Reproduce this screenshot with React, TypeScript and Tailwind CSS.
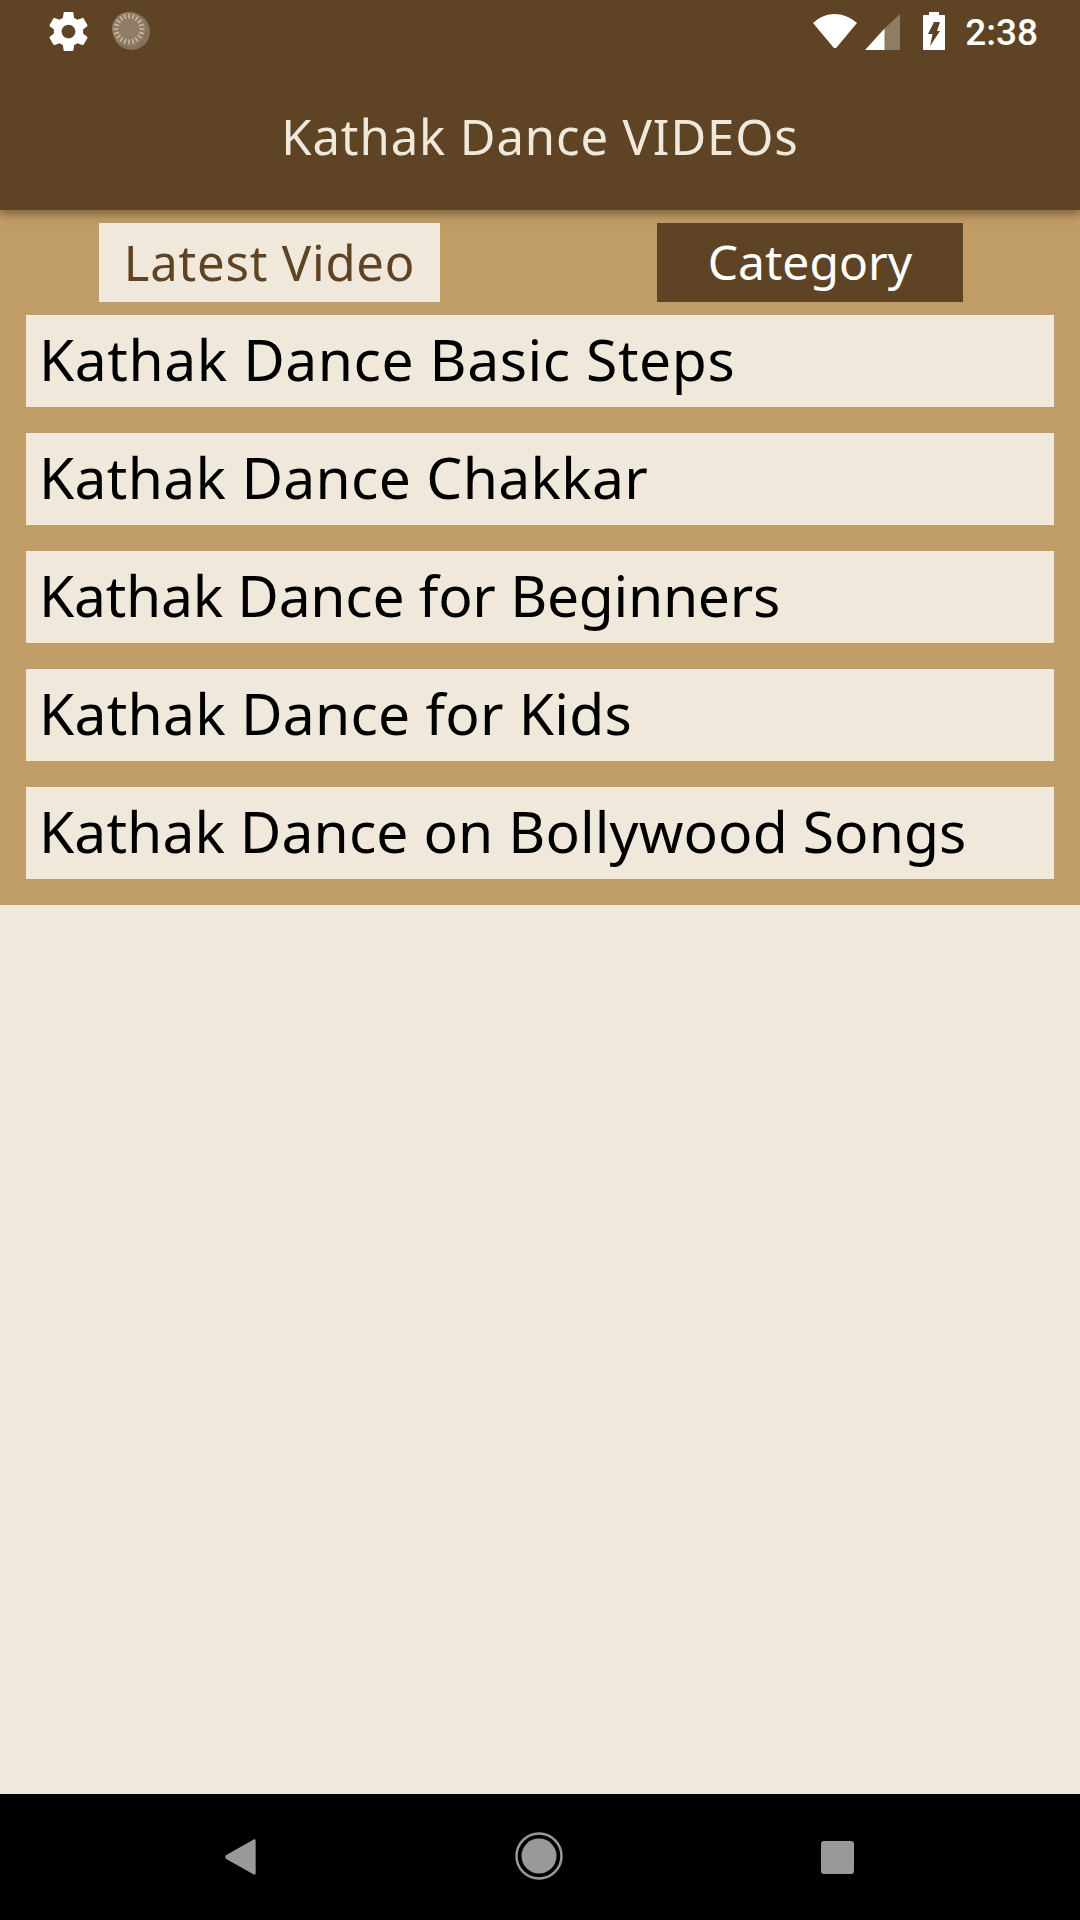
const rows = [
  { text: "Kathak Dance Basic Steps", track: "tracking-[0.55px]" },
  { text: "Kathak Dance Chakkar", track: "tracking-[0.3px]" },
  { text: "Kathak Dance for Beginners", track: "tracking-[-0.28px]" },
  { text: "Kathak Dance for Kids", track: "tracking-[0.23px]" },
  { text: "Kathak Dance on Bollywood Songs", track: "tracking-[0.08px]" },
];
const ticks = Array.from({ length: 20 }, (_, i) => i * 18);

export default function App() {
  return (
    <div className="flex h-[1920px] w-[1080px] flex-col overflow-hidden bg-[#f0e8da] font-['Noto_Sans',sans-serif]">
      <header className="relative z-10 h-[210px] shrink-0 bg-[#5e4324] shadow-[0_4px_9px_rgba(60,40,15,0.5)]">
        <div className="flex h-[62px] items-center pl-[45px] pr-[42px]">
          <svg viewBox="0 0 24 24" className="h-[47px] w-[47px]" fill="#fff">
            <path d="M19.43 12.98c.04-.32.07-.64.07-.98s-.03-.66-.07-.98l2.11-1.65c.19-.15.24-.42.12-.64l-2-3.46c-.12-.22-.39-.3-.61-.22l-2.49 1c-.52-.4-1.08-.73-1.69-.98l-.38-2.65C14.46 2.18 14.25 2 14 2h-4c-.25 0-.46.18-.49.42l-.38 2.65c-.61.25-1.17.59-1.69.98l-2.49-1c-.23-.09-.49 0-.61.22l-2 3.46c-.13.22-.07.49.12.64l2.11 1.65c-.04.32-.07.65-.07.98s.03.66.07.98l-2.11 1.65c-.19.15-.24.42-.12.64l2 3.46c.12.22.39.3.61.22l2.49-1c.52.4 1.08.73 1.69.98l.38 2.65c.03.24.24.42.49.42h4c.25 0 .46-.18.49-.42l.38-2.65c.61-.25 1.17-.59 1.69-.98l2.49 1c.23.09.49 0 .61-.22l2-3.46c.12-.22.07-.49-.12-.64l-2.11-1.65zM12 15.5c-1.93 0-3.5-1.57-3.5-3.5s1.57-3.5 3.5-3.5 3.5 1.57 3.5 3.5-1.57 3.5-3.5 3.5z" />
          </svg>
          <svg viewBox="0 0 40 40" className="ml-[19px] h-[40px] w-[40px]">
            <circle cx="20.5" cy="20.5" r="18.5" fill="#fff" opacity="0.25" />
            <path d="M35.5 12 A17 17 0 0 1 12 35.5 A17 17 0 0 0 35.5 12Z" fill="#fff" />
            <circle cx="18" cy="18" r="17" fill="#8f7c65" />
            {ticks.map((a) => (
              <rect key={a} x="17.3" y="2.5" width="1.4" height="5" fill="#c9bdae" transform={`rotate(${a} 18 18)`} />
            ))}
          </svg>
          <div className="ml-auto flex items-center">
            <svg viewBox="1 4 44 34" className="h-[36px] w-[44px]">
              <path d="M1 13 C14 1 31 1 45 13 L24.5 37.5 C23.7 38.3 22.3 38.3 21.5 37.5 Z" fill="#fff" />
            </svg>
            <svg viewBox="1 1 34 35" className="ml-[8px] h-[36px] w-[35px] translate-y-[1px]">
              <path d="M35 1 V36 H20 V15 Z" fill="#8f7c65" />
              <path d="M20 15 V36 H1 Z" fill="#fff" />
            </svg>
            <svg viewBox="0 0 22 38" className="ml-[23px] h-[38px] w-[22px]">
              <path fillRule="evenodd" d="M6 0 H16 V3 H21 C21.6 3 22 3.4 22 4 V37 C22 37.6 21.6 38 21 38 H1 C.4 38 0 37.6 0 37 V4 C0 3.4 .4 3 1 3 H6 Z M11 10 H17 L14 19 H17 L7 34 L9.5 22 H5 Z" fill="#fff" />
            </svg>
            <span className="ml-[20px] translate-y-[1px] font-['Roboto',sans-serif] text-[37px] leading-none font-medium text-white">2:38</span>
          </div>
        </div>
        <h1 className="mt-[42px] text-center text-[49px] leading-[64px] font-normal tracking-[0.9px] text-[#f0e8da]">Kathak Dance VIDEOs</h1>
      </header>

      <main className="shrink-0 bg-[#c09c67] px-[26px] pt-[13px] pb-[26px]">
        <div className="relative h-[79px]">
          <div className="ml-[73px] flex h-[79px] w-[341px] items-center justify-center bg-[#f0e8da] text-[49px] tracking-[0.8px] text-[#5e4324]">Latest Video</div>
          <div className="absolute top-0 left-[631px] flex h-[79px] w-[306px] items-center justify-center bg-[#5e4324] pb-[2px] text-[48px] text-white">Category</div>
        </div>
        <div className="mt-[13px] flex flex-col gap-[26px]">
          {rows.map((r) => (
            <div key={r.text} className={`flex h-[92px] items-center bg-[#f0e8da] pb-[2px] pl-[13px] text-[57px] whitespace-nowrap text-black ${r.track}`}>{r.text}</div>
          ))}
        </div>
      </main>

      <div className="flex-1" />

      <nav className="relative flex h-[126px] shrink-0 items-center justify-center bg-black">
        <svg viewBox="0 0 34 38" className="absolute top-[45px] left-[224px] h-[36px] w-[33px]">
          <path d="M31 .5 C32 0 33 .6 33 2 V36 C33 37.4 32 38 31 37.5 L2 21 C.5 20 .5 18 2 17 Z" fill="#999" />
        </svg>
        <svg viewBox="0 0 48 48" className="absolute top-[38px] left-[515px] h-[48px] w-[48px]">
          <circle cx="24" cy="24" r="22.5" fill="none" stroke="#999" strokeWidth="2.5" />
          <circle cx="24" cy="24" r="17.5" fill="#999" />
        </svg>
        <div className="absolute top-[47px] left-[821px] h-[33px] w-[33px] rounded-[3px] bg-[#999]" />
      </nav>
    </div>
  );
}
